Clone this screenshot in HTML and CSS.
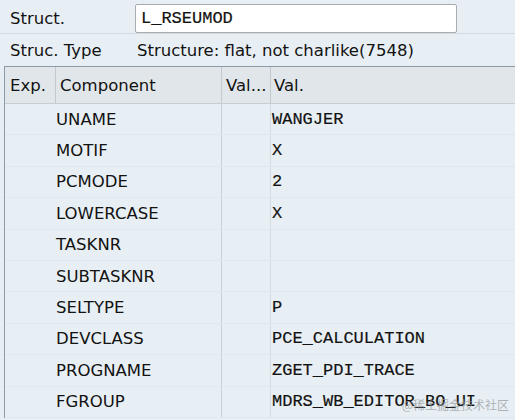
FILE: index.html
```html
<!DOCTYPE html>
<html>
<head>
<meta charset="utf-8">
<link rel="stylesheet" href="styles.css">
</head>
<body>
<div class="screen">
  <div class="field-row first">
    <div class="label">Struct.</div>
    <div class="input">L_RSEUMOD</div>
  </div>
  <div class="field-row second">
    <div class="label">Struc. Type</div>
    <div class="info">Structure: flat, not charlike(7548)</div>
  </div>
  <div class="table">
    <div class="thead">
      <div class="th exp">Exp.</div>
      <div class="th comp">Component</div>
      <div class="th val1">Val...</div>
      <div class="th val2">Val.</div>
    </div>
    <div class="tbody">
      <div class="tr"><div class="td exp"></div><div class="td comp">UNAME</div><div class="td val1"></div><div class="td val2">WANGJER</div></div>
      <div class="tr"><div class="td exp"></div><div class="td comp">MOTIF</div><div class="td val1"></div><div class="td val2">X</div></div>
      <div class="tr"><div class="td exp"></div><div class="td comp">PCMODE</div><div class="td val1"></div><div class="td val2">2</div></div>
      <div class="tr"><div class="td exp"></div><div class="td comp">LOWERCASE</div><div class="td val1"></div><div class="td val2">X</div></div>
      <div class="tr"><div class="td exp"></div><div class="td comp">TASKNR</div><div class="td val1"></div><div class="td val2"></div></div>
      <div class="tr"><div class="td exp"></div><div class="td comp">SUBTASKNR</div><div class="td val1"></div><div class="td val2"></div></div>
      <div class="tr"><div class="td exp"></div><div class="td comp">SELTYPE</div><div class="td val1"></div><div class="td val2">P</div></div>
      <div class="tr"><div class="td exp"></div><div class="td comp">DEVCLASS</div><div class="td val1"></div><div class="td val2">PCE_CALCULATION</div></div>
      <div class="tr"><div class="td exp"></div><div class="td comp">PROGNAME</div><div class="td val1"></div><div class="td val2">ZGET_PDI_TRACE</div></div>
      <div class="tr"><div class="td exp"></div><div class="td comp">FGROUP</div><div class="td val1"></div><div class="td val2">MDRS_WB_EDITOR_BO_UI</div></div>
    </div>
  </div>
  <div class="watermark">@稀土掘金技术社区</div>
</div>
</body>
</html>
```

FILE: styles.css
```css
html, body {
  margin: 0;
  padding: 0;
}
body {
  background: #e8eff4;
  font-family: "DejaVu Sans", "Liberation Sans", sans-serif;
  font-size: 16.5px;
  color: #121212;
}
.screen {
  position: relative;
  width: 515px;
  height: 420px;
  overflow: hidden;
}
.field-row {
  display: flex;
  align-items: center;
}
.field-row.first {
  height: 33px;
  border-bottom: 1px solid #d3dbe1;
}
.field-row.first .label {
  padding-top: 3px;
}
.field-row.second {
  height: 32px;
}
.label {
  width: 125px;
  padding-left: 10px;
  flex: none;
}
.input {
  width: 315px;
  height: 27px;
  margin-top: 4px;
  align-self: flex-start;
  background: #fff;
  border: 1px solid #a9adb1;
  border-radius: 2px;
  padding-left: 5px;
  font-family: "Liberation Mono", monospace;
  font-size: 17px;
  -webkit-text-stroke: 0.2px #121212;
  line-height: 28px;
}
.info {
  padding-left: 2px;
}
.table {
  margin-left: 4px;
  border-left: 1px solid #8d9ba6;
  border-top: 1px solid #8d9ba6;
}
.thead {
  display: grid;
  grid-template-columns: 51px 166px 49px 1fr;
  height: 36px;
  background: #e1e6ea;
  border-bottom: 1px solid #c7ced3;
}
.th {
  display: flex;
  align-items: center;
  padding-left: 5px;
  padding-top: 1px;
  border-right: 1px solid #c3c9ce;
}
.th.val2 { border-right: none; padding-left: 3px; }
.th.comp { padding-left: 4px; }
.th.val1 { padding-left: 4px; }
.tr {
  display: grid;
  grid-template-columns: 51px 166px 49px 1fr;
  height: 31.4px;
  border-bottom: 1px solid #e1e8ed;
  box-sizing: border-box;
}
.td {
  display: flex;
  align-items: center;
}
.td.comp {
  padding-left: 0;
  border-right: 1px solid #c9d0d6;
}
.td.val1 {
  border-right: 1px solid #d6dde2;
}
.td.val2 {
  padding-left: 1px;
  font-family: "Liberation Mono", monospace;
  font-size: 17px;
  -webkit-text-stroke: 0.2px #121212;
}
.watermark {
  position: absolute;
  right: 6px;
  bottom: 7px;
  font-family: "Noto Sans CJK SC", sans-serif;
  font-size: 12px;
  color: rgba(150, 155, 160, 0.75);
}
```
